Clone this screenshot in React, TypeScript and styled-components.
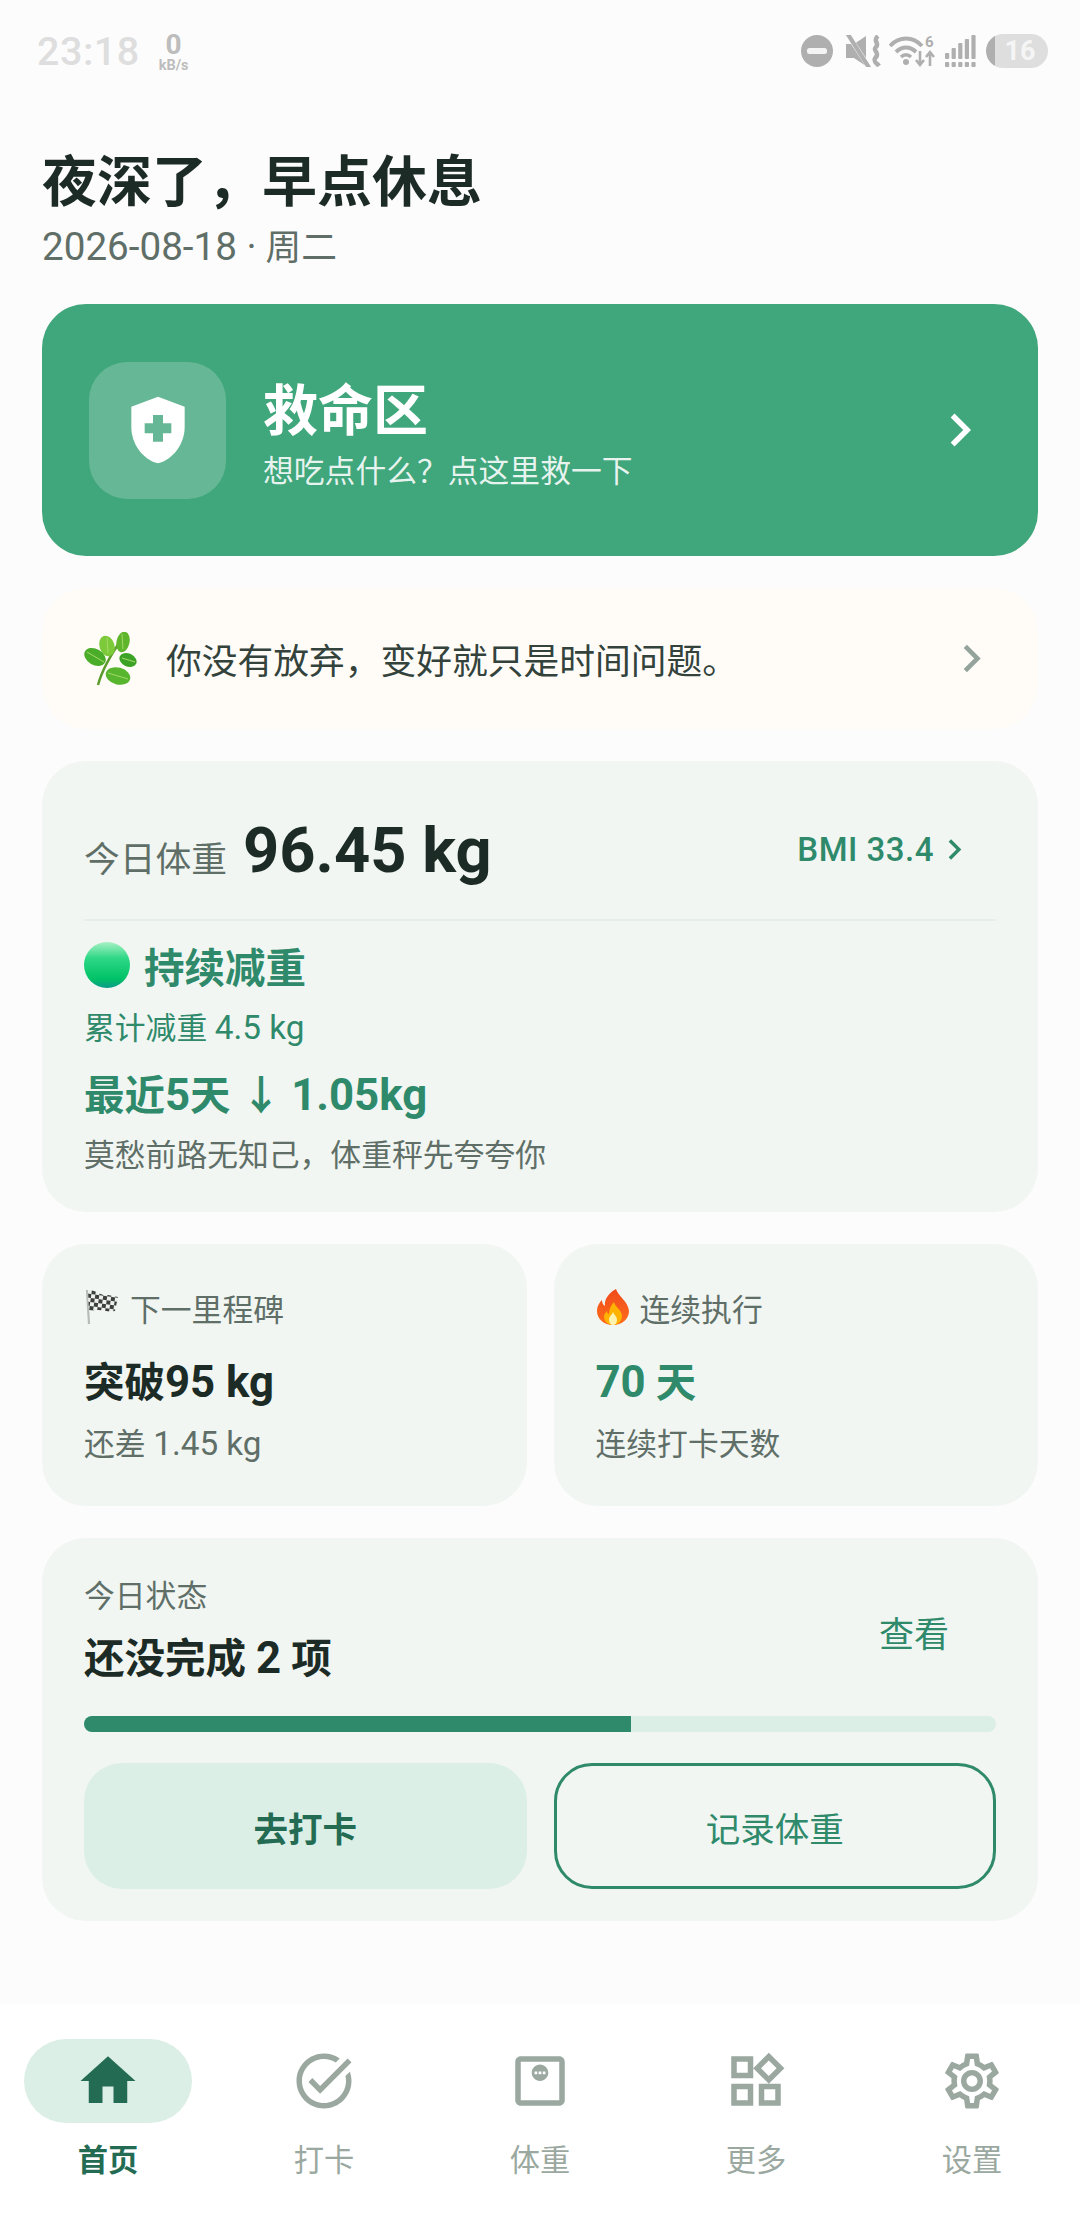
import React from "react";
import styled, { createGlobalStyle } from "styled-components";
import {
  MdHome,
  MdTaskAlt,
  MdOutlineMonitorWeight,
  MdOutlineWidgets,
  MdOutlineSettings,
  MdHealthAndSafety,
  MdChevronRight,
} from "react-icons/md";

const Global = createGlobalStyle`
  html, body { margin: 0; padding: 0; background: #fcfcfc; }
  * { box-sizing: border-box; }
  body { font-family: Roboto, "Noto Sans CJK SC", sans-serif; }
`;

const GREEN = "#2f8a6b";
const DARK_GREEN = "#236b53";
const INK = "#1c2b25";
const MUTED = "#5f6f68";
const PALE = "#dcefe6";
const CARD = "#f1f6f2";
const NAV_GREY = "#9aa8a0";

const Page = styled.div`
  width: 1080px;
  min-height: 2214px;
  display: flex;
  flex-direction: column;
  background: #fcfcfc;
`;

const StatusBar = styled.div`
  height: 102px;
  padding: 0 32px 0 37px;
  display: flex;
  align-items: center;
  justify-content: space-between;
`;
const StatusLeft = styled.div`
  display: flex;
  align-items: center;
  gap: 19px;
`;
const Clock = styled.span`
  font-size: 39.5px;
  font-weight: 500;
  letter-spacing: 0.5px;
  color: #dedede;
`;
const Speed = styled.div`
  display: flex;
  flex-direction: column;
  align-items: center;
  color: #bdbdbd;
  font-weight: 700;
  margin-top: 3px;
`;
const SpeedValue = styled.span`
  font-size: 28px;
  line-height: 26px;
`;
const SpeedUnit = styled.span`
  font-size: 14.5px;
  line-height: 15px;
`;
const StatusRight = styled.div`
  display: flex;
  align-items: center;
  gap: 8px;
`;
const Battery = styled.div`
  width: 62px;
  height: 34px;
  border-radius: 17px;
  background: linear-gradient(90deg, #afafaf 0 9px, #dedede 9px);
  color: #f5f5f5;
  font-size: 27px;
  font-weight: 700;
  line-height: 34px;
  text-align: center;
  padding-left: 6px;
`;

const Main = styled.main`
  flex: 1;
  padding: 0 42px;
  display: flex;
  flex-direction: column;
`;
const Title = styled.h1`
  margin: 48px 0 0;
  font-size: 55px;
  line-height: 64px;
  font-weight: 700;
  color: ${INK};
`;
const DateLine = styled.div`
  margin-top: 12px;
  font-size: 35.75px;
  line-height: 44px;
  color: ${MUTED};
`;
const Latin = styled.span`
  font-size: 1.08em;
  line-height: 1;
`;

const Hero = styled.div`
  margin-top: 34px;
  height: 252px;
  border-radius: 44px;
  background: #40a67b;
  padding: 0 48px 0 47px;
  display: flex;
  align-items: center;
  color: #fff;
`;
const HeroIconBox = styled.div`
  width: 137px;
  height: 137px;
  border-radius: 38px;
  background: rgba(255, 255, 255, 0.2);
  display: flex;
  align-items: center;
  justify-content: center;
  font-size: 80px;
`;
const HeroText = styled.div`
  flex: 1;
  margin-left: 37px;
  padding-top: 11px;
`;
const HeroTitle = styled.div`
  font-size: 55px;
  line-height: 64px;
  font-weight: 700;
`;
const HeroSub = styled.div`
  font-size: 30.8px;
  line-height: 40px;
  margin-top: 9px;
  color: rgba(255, 255, 255, 0.88);
`;
const HeroChevron = styled.div`
  display: flex;
  font-size: 66px;
  margin-right: -3px;
`;

const Quote = styled.div`
  margin-top: 32px;
  height: 141px;
  border-radius: 44px;
  background: #fffcf8;
  padding: 0 39px 0 42px;
  display: flex;
  align-items: center;
`;
const QuoteText = styled.div`
  flex: 1;
  margin-left: 28px;
  padding-top: 6px;
  font-size: 35.75px;
  line-height: 44px;
  color: #33433c;
`;
const QuoteChevron = styled.div`
  display: flex;
  font-size: 55px;
  color: #94a49d;
`;

const Card = styled.section`
  background: ${CARD};
  border-radius: 44px;
`;
const WeightCard = styled(Card)`
  margin-top: 32px;
  height: 451px;
  padding: 49px 42px 0;
`;
const WeightTop = styled.div`
  display: flex;
  align-items: center;
  justify-content: space-between;
  height: 80px;
`;
const WeightLeft = styled.div`
  display: flex;
  align-items: baseline;
  gap: 16px;
`;
const WeightLabel = styled.span`
  font-size: 35.75px;
  color: ${MUTED};
`;
const WeightValue = styled.span`
  font-size: 63.25px;
  line-height: 80px;
  font-weight: 700;
  color: ${INK};
`;
const BmiLink = styled.div`
  display: flex;
  align-items: center;
  padding-right: 32px;
  font-size: 33px;
  font-weight: 500;
  letter-spacing: 0.5px;
  color: ${GREEN};
  margin-top: -2px;
`;
const BmiChevron = styled.span`
  display: flex;
  font-size: 41px;
  margin: 0 -11px 0 0;
`;
const Divider = styled.div`
  height: 2px;
  margin-top: 29px;
  background: #e6eee9;
`;
const StageRow = styled.div`
  margin-top: 16px;
  display: flex;
  align-items: center;
  gap: 14px;
  height: 56px;
  font-size: 40.5px;
  font-weight: 700;
  color: ${GREEN};
`;
const GreenLine = styled.div`
  margin-top: 16px;
  font-size: 30.8px;
  line-height: 40px;
  color: ${GREEN};
`;
const RecentLine = styled.div`
  margin-top: 21px;
  font-size: 40.5px;
  line-height: 52px;
  font-weight: 700;
  color: ${GREEN};
`;
const MutedLine = styled.div<{ $mt?: number }>`
  margin-top: ${(p) => p.$mt ?? 14}px;
  font-size: 30.8px;
  line-height: 40px;
  color: ${MUTED};
`;

const TwoCol = styled.div`
  margin-top: 32px;
  display: grid;
  grid-template-columns: 1fr 1fr;
  gap: 27px;
`;
const SmallCard = styled(Card)`
  height: 262px;
  padding: 43px 42px 0;
`;
const SmallHead = styled.div`
  display: flex;
  align-items: center;
  gap: 10px;
  height: 40px;
  font-size: 30.8px;
  color: ${MUTED};
`;
const SmallValue = styled.div<{ $accent?: boolean }>`
  margin-top: 30px;
  font-size: 40.5px;
  line-height: 52px;
  font-weight: 700;
  color: ${(p) => (p.$accent ? GREEN : INK)};
`;

const StatusCard = styled(Card)`
  margin-top: 32px;
  height: 383px;
  padding: 39px 42px 32px;
`;
const StatusTop = styled.div`
  display: flex;
  align-items: center;
  justify-content: space-between;
`;
const StatusLabel = styled.div`
  font-size: 30.8px;
  line-height: 40px;
  color: ${MUTED};
`;
const StatusTitle = styled.div`
  margin-top: 16px;
  font-size: 40.5px;
  line-height: 52px;
  font-weight: 700;
  color: ${INK};
`;
const ViewLink = styled.div`
  font-size: 35px;
  line-height: 44px;
  padding: 10px 47px 0 0;
  color: ${GREEN};
`;
const Track = styled.div`
  margin-top: 31px;
  height: 16px;
  border-radius: 8px;
  background: ${PALE};
  overflow: hidden;
`;
const Fill = styled.div`
  height: 100%;
  background: ${GREEN};
`;
const Buttons = styled.div`
  margin-top: 31px;
  display: grid;
  grid-template-columns: 1fr 1fr;
  gap: 27px;
`;
const Btn = styled.div<{ $solid?: boolean }>`
  height: 126px;
  border-radius: 38px;
  display: flex;
  align-items: center;
  justify-content: center;
  padding-top: 2px;
  font-size: 34.5px;
  font-weight: ${(p) => (p.$solid ? 700 : 400)};
  color: ${(p) => (p.$solid ? DARK_GREEN : GREEN)};
  background: ${(p) => (p.$solid ? PALE : "transparent")};
  border: ${(p) => (p.$solid ? "none" : `3px solid ${GREEN}`)};
`;

const Nav = styled.nav`
  height: 210px;
  background: #fff;
  display: grid;
  grid-template-columns: repeat(5, 216px);
  padding-top: 35px;
`;
const NavItem = styled.div<{ $active?: boolean }>`
  display: flex;
  flex-direction: column;
  align-items: center;
  color: ${(p) => (p.$active ? DARK_GREEN : NAV_GREY)};
`;
const NavPill = styled.div<{ $active?: boolean }>`
  width: 168px;
  height: 84px;
  border-radius: 42px;
  background: ${(p) => (p.$active ? PALE : "transparent")};
  display: flex;
  align-items: center;
  justify-content: center;
  font-size: 66px;
`;
const NavLabel = styled.div<{ $active?: boolean }>`
  margin-top: 18px;
  font-size: 30.25px;
  line-height: 40px;
  font-weight: ${(p) => (p.$active ? 700 : 400)};
`;

const MinusIcon = () => (
  <svg width="36" height="32" viewBox="0 0 36 32">
    <circle cx="16" cy="16" r="16" fill="#afafaf" />
    <rect x="6" y="13" width="20" height="6" rx="2.5" fill="#f4f4f4" />
  </svg>
);
const MuteIcon = () => (
  <svg width="36" height="32" viewBox="0 0 36 32" fill="none">
    <path d="M1 9h8L21 1v30L9 23H1z" fill="#afafaf" />
    <path d="M3 0l21 32" stroke="#fcfcfc" strokeWidth="5" />
    <path d="M3 1l2 0 19 30-2 0z" stroke="#afafaf" strokeWidth="2.5" />
    <path d="M33 1c-6 5 2 7-2 11s4 5 0 10 1 6 3 9" stroke="#afafaf" strokeWidth="4.5" />
  </svg>
);
const WifiIcon = () => (
  <svg width="47" height="36" viewBox="0 -2 47 36" fill="none">
    <path d="M1 11C10 1 24 1 33 11" stroke="#afafaf" strokeWidth="4" />
    <path d="M7 17c6-6 14-6 20 0" stroke="#afafaf" strokeWidth="4" />
    <path d="M12 22c3-3 7-3 10 0" stroke="#afafaf" strokeWidth="3.5" />
    <circle cx="17" cy="27" r="3" fill="#afafaf" />
    <text x="36" y="12" fontFamily="Roboto, sans-serif" fontSize="15" fontWeight="700" fill="#afafaf">
      6
    </text>
    <path d="M31 16v14M27 25l4 5 4-5M41 31V17M37 22l4-5 4 5" stroke="#afafaf" strokeWidth="2.6" />
  </svg>
);
const signalBars = [18, 13, 8, 4, 0];
const SignalIcon = () => (
  <svg width="34" height="32" viewBox="0 0 34 32" fill="#afafaf">
    {signalBars.map((top, i) => (
      <g key={i}>
        <rect x={1 + i * 6.6} y={top} width="4.2" height={24 - top} rx="1" />
        <rect x={1 + i * 6.6} y="27" width="4.2" height="5" rx="1" />
      </g>
    ))}
  </svg>
);

const leaves = [
  { cx: 39, cy: 10, rx: 6.5, ry: 10.5, rot: 12, fill: "#5fb52b" },
  { cx: 23, cy: 14, rx: 7.5, ry: 10.5, rot: -18, fill: "#7cc93a" },
  { cx: 44, cy: 28, rx: 9, ry: 6.5, rot: 25, fill: "#3da326" },
  { cx: 11, cy: 25, rx: 11.5, ry: 8, rot: 30, fill: "#4aad2a" },
  { cx: 34, cy: 44, rx: 12.5, ry: 8.5, rot: 15, fill: "#58b52e" },
];
const HerbIcon = () => (
  <svg width="54" height="54" viewBox="0 0 54 54" fill="none">
    <path d="M14 53C18 38 27 22 40 4" stroke="#5c9a2c" strokeWidth="2.5" />
    {leaves.map((l) => (
      <ellipse
        key={l.cx}
        cx={l.cx}
        cy={l.cy}
        rx={l.rx}
        ry={l.ry}
        fill={l.fill}
        transform={`rotate(${l.rot} ${l.cx} ${l.cy})`}
      />
    ))}
    <path d="M38 2l1 15M23 6l1 15M38 26l13 4M3 20l17 10M24 41l20 6" stroke="#a6d96a" strokeWidth="1" />
  </svg>
);
const GreenDot = () => (
  <svg width="46" height="46" viewBox="0 0 46 46">
    <defs>
      <linearGradient id="dot" x1="0" y1="0" x2="0" y2="1">
        <stop offset="0" stopColor="#a7f0c4" />
        <stop offset="0.35" stopColor="#2fd886" />
        <stop offset="0.8" stopColor="#00c266" />
        <stop offset="1" stopColor="#0a9a8a" />
      </linearGradient>
    </defs>
    <circle cx="23" cy="23" r="23" fill="url(#dot)" />
  </svg>
);
const FlagIcon = () => (
  <svg width="36" height="36" viewBox="0 0 36 36">
    <defs>
      <pattern id="chk" width="8" height="8" patternUnits="userSpaceOnUse" patternTransform="rotate(8)">
        <rect width="8" height="8" fill="#eef0ee" />
        <rect width="4" height="4" fill="#3b3f3d" />
        <rect x="4" y="4" width="4" height="4" fill="#3b3f3d" />
      </pattern>
    </defs>
    <path d="M3 1l2 34" stroke="#b7bcb9" strokeWidth="2.2" />
    <path d="M4 1c9 0 11 6 20 5l10 2-3 14c-9 2-15-4-26 1z" fill="url(#chk)" />
  </svg>
);
const FireIcon = () => (
  <svg width="34" height="36" viewBox="0 0 34 36">
    <defs>
      <linearGradient id="flame" x1="0" y1="0" x2="0" y2="1">
        <stop offset="0" stopColor="#ef4a1c" />
        <stop offset="1" stopColor="#ff6d1a" />
      </linearGradient>
    </defs>
    <path
      d="M20 0c2 7 12 12 13 22 0 8-7 14-16 14S1 30 1 22c0-5 3-9 5-11 0 3 1 5 3 6C8 10 13 4 20 0z"
      fill="url(#flame)"
    />
    <path d="M18 13c1 5 8 8 8 14 0 5-4 9-9 9s-9-4-9-8c0-3 2-5 3-6 0 2 1 3 2 3 0-5 2-9 5-12z" fill="#ffb300" />
    <path d="M17 23c1 3 4 4 4 8 0 3-2 5-4 5s-4-2-4-5c0-4 3-5 4-8z" fill="#fff3b0" />
  </svg>
);

const tabs = [
  { label: "首页", Icon: MdHome, active: true },
  { label: "打卡", Icon: MdTaskAlt },
  { label: "体重", Icon: MdOutlineMonitorWeight },
  { label: "更多", Icon: MdOutlineWidgets },
  { label: "设置", Icon: MdOutlineSettings },
];

export default function App() {
  return (
    <Page>
      <Global />
      <StatusBar>
        <StatusLeft>
          <Clock>23:18</Clock>
          <Speed>
            <SpeedValue>0</SpeedValue>
            <SpeedUnit>kB/s</SpeedUnit>
          </Speed>
        </StatusLeft>
        <StatusRight>
          <MinusIcon />
          <MuteIcon />
          <WifiIcon />
          <SignalIcon />
          <Battery>16</Battery>
        </StatusRight>
      </StatusBar>
      <Main>
        <Title>{"夜深了\uFF0C早点休息"}</Title>
        <DateLine>
          <Latin>2026-08-18 ·</Latin> 周二
        </DateLine>
        <Hero>
          <HeroIconBox>
            <MdHealthAndSafety />
          </HeroIconBox>
          <HeroText>
            <HeroTitle>救命区</HeroTitle>
            <HeroSub>{"想吃点什么\uFF1F点这里救一下"}</HeroSub>
          </HeroText>
          <HeroChevron>
            <MdChevronRight />
          </HeroChevron>
        </Hero>
        <Quote>
          <HerbIcon />
          <QuoteText>{"你没有放弃\uFF0C变好就只是时间问题。"}</QuoteText>
          <QuoteChevron>
            <MdChevronRight />
          </QuoteChevron>
        </Quote>
        <WeightCard>
          <WeightTop>
            <WeightLeft>
              <WeightLabel>今日体重</WeightLabel>
              <WeightValue>96.45 kg</WeightValue>
            </WeightLeft>
            <BmiLink>
              BMI 33.4
              <BmiChevron>
                <MdChevronRight />
              </BmiChevron>
            </BmiLink>
          </WeightTop>
          <Divider />
          <StageRow>
            <GreenDot />
            持续减重
          </StageRow>
          <GreenLine>
            累计减重 <Latin>4.5 kg</Latin>
          </GreenLine>
          <RecentLine>
            最近<Latin>5</Latin>天 ↓ <Latin>1.05kg</Latin>
          </RecentLine>
          <MutedLine>{"莫愁前路无知己\uFF0C体重秤先夸夸你"}</MutedLine>
        </WeightCard>
        <TwoCol>
          <SmallCard>
            <SmallHead>
              <FlagIcon />
              下一里程碑
            </SmallHead>
            <SmallValue>
              突破<Latin>95 kg</Latin>
            </SmallValue>
            <MutedLine $mt={16}>
              还差 <Latin>1.45 kg</Latin>
            </MutedLine>
          </SmallCard>
          <SmallCard>
            <SmallHead>
              <FireIcon />
              连续执行
            </SmallHead>
            <SmallValue $accent>
              <Latin>70</Latin> 天
            </SmallValue>
            <MutedLine $mt={16}>连续打卡天数</MutedLine>
          </SmallCard>
        </TwoCol>
        <StatusCard>
          <StatusTop>
            <div>
              <StatusLabel>今日状态</StatusLabel>
              <StatusTitle>
                还没完成 <Latin>2</Latin> 项
              </StatusTitle>
            </div>
            <ViewLink>查看</ViewLink>
          </StatusTop>
          <Track>
            <Fill style={{ width: "60%" }} />
          </Track>
          <Buttons>
            <Btn $solid>去打卡</Btn>
            <Btn>记录体重</Btn>
          </Buttons>
        </StatusCard>
      </Main>
      <Nav>
        {tabs.map(({ label, Icon, active }) => (
          <NavItem key={label} $active={active}>
            <NavPill $active={active}>
              <Icon />
            </NavPill>
            <NavLabel $active={active}>{label}</NavLabel>
          </NavItem>
        ))}
      </Nav>
    </Page>
  );
}
